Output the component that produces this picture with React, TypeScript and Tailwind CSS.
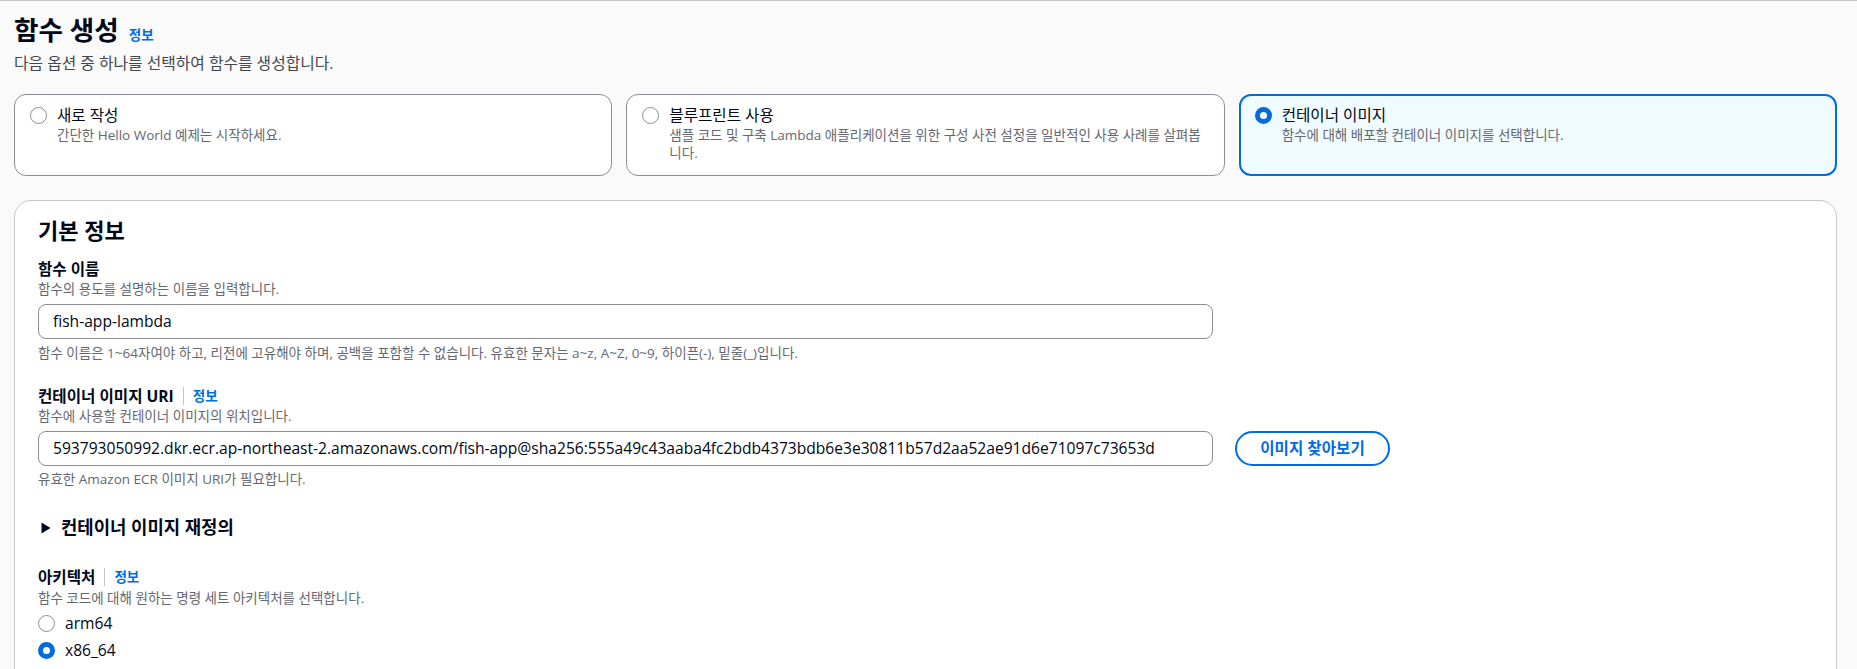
import React from 'react';

// 라디오 표시 (선택 / 미선택)
const Radio = ({ checked }: { checked?: boolean }) =>
    checked ? (
        <span className="block w-[17px] h-[17px] shrink-0 rounded-full border-[5px] border-[#006ce0] bg-white" />
    ) : (
        <span className="block w-[17px] h-[17px] shrink-0 rounded-full border-[1.5px] border-[#8c8c94] bg-white" />
    );

const Info = () => <a className="text-[13.5px] font-bold text-[#006ce0] leading-[18px] cursor-pointer">정보</a>;

const LabelWithInfo = ({ text }: { text: string }) => (
    <div className="flex items-center h-[22px]">
        <span className="text-[15.6px] font-bold leading-[22px]">{text}</span>
        <span className="mx-[9px] h-[18px] w-px bg-[#c6c6cd]" />
        <Info />
    </div>
);

interface Tile {
    title: string;
    desc: string;
    selected?: boolean;
}

const tiles: Tile[] = [
    { title: '새로 작성', desc: '간단한 Hello World 예제는 시작하세요.' },
    { title: '블루프린트 사용', desc: '샘플 코드 및 구축 Lambda 애플리케이션을 위한 구성 사전 설정을 일반적인 사용 사례를 살펴봅니다.' },
    { title: '컨테이너 이미지', desc: '함수에 대해 배포할 컨테이너 이미지를 선택합니다.', selected: true },
];

const uri =
    '593793050992.dkr.ecr.ap-northeast-2.amazonaws.com/fish-app@sha256:555a49c43aaba4fc2bdb4373bdb6e3e30811b57d2aa52ae91d6e71097c73653d';

const App = () => {
    return (
        <div className="min-h-screen bg-[#fafafa] border-t border-[#c6c6cd] pl-[14px] pr-[20px] pt-[12px] pb-10 text-[#000716] font-['Open_Sans','Noto_Sans_CJK_KR',sans-serif]">
            {/* Header */}
            <div className="flex items-baseline gap-[10px]">
                <h1 className="text-[26.6px] font-bold leading-[34px]">함수 생성</h1>
                <Info />
            </div>
            <p className="mt-[5px] text-[15.8px] leading-[22px] text-[#424650]">다음 옵션 중 하나를 선택하여 함수를 생성합니다.</p>

            {/* Tiles */}
            <div className="mt-[20px] grid grid-cols-3 gap-[14px]">
                {tiles.map((t) => (
                    <div
                        key={t.title}
                        className={
                            t.selected
                                ? 'min-h-[82px] rounded-[12px] border-2 border-[#006ce0] bg-[#f0fbff] pt-[8px] pl-[14px] pr-[17px] pb-[12px] flex gap-[10px]'
                                : 'min-h-[82px] rounded-[12px] border border-[#8c8c94] bg-white pt-[9px] pl-[15px] pr-[18px] pb-[13px] flex gap-[10px]'
                        }
                    >
                        <div className="mt-[3px]">
                            <Radio checked={t.selected} />
                        </div>
                        <div>
                            <div className="text-[15.6px] leading-[22px]">{t.title}</div>
                            <div className="text-[13.5px] leading-[18px] text-[#656871]">{t.desc}</div>
                        </div>
                    </div>
                ))}
            </div>

            {/* 기본 정보 */}
            <div className="mt-[24px] rounded-[17px] border border-[#c6c6cd] bg-white px-[23px] pt-[16px] pb-10">
                <h2 className="text-[22px] font-bold leading-[27px]">기본 정보</h2>

                <div className="mt-[14px] text-[15.6px] font-bold leading-[22px]">함수 이름</div>
                <div className="text-[13.5px] leading-[18px] text-[#656871]">함수의 용도를 설명하는 이름을 입력합니다.</div>
                <div className="mt-[6px] w-[1175px] h-[35px] rounded-[8px] border border-[#8c8c94] bg-white px-[14px] flex items-center text-[15.6px]">
                    fish-app-lambda
                </div>
                <div className="mt-[5px] text-[13.5px] leading-[18px] text-[#656871]">
                    함수 이름은 1~64자여야 하고, 리전에 고유해야 하며, 공백을 포함할 수 없습니다. 유효한 문자는 a~z, A~Z, 0~9, 하이픈(-), 밑줄(_)입니다.
                </div>

                <div className="mt-[23px]">
                    <LabelWithInfo text="컨테이너 이미지 URI" />
                </div>
                <div className="text-[13.5px] leading-[18px] text-[#656871]">함수에 사용할 컨테이너 이미지의 위치입니다.</div>
                <div className="mt-[6px] flex items-center gap-[22px]">
                    <div className="w-[1175px] h-[35px] rounded-[8px] border border-[#8c8c94] bg-white px-[14px] flex items-center text-[15.6px] whitespace-nowrap overflow-hidden">
                        {uri}
                    </div>
                    <button className="h-[35px] w-[155px] rounded-full border-2 border-[#006ce0] text-[15.6px] font-bold text-[#006ce0]">
                        이미지 찾아보기
                    </button>
                </div>
                <div className="mt-[4px] text-[13.5px] leading-[18px] text-[#656871]">유효한 Amazon ECR 이미지 URI가 필요합니다.</div>

                <div className="mt-[27px] flex items-center h-[25px]">
                    <svg width="10" height="12" viewBox="0 0 10 12" className="ml-[3px]">
                        <path d="M0.5 0.5 L9.5 6 L0.5 11.5 Z" fill="#000716" />
                    </svg>
                    <span className="ml-[10px] text-[17.8px] font-bold leading-[25px]">컨테이너 이미지 재정의</span>
                </div>

                <div className="mt-[26px]">
                    <LabelWithInfo text="아키텍처" />
                </div>
                <div className="mt-[1px] text-[13.5px] leading-[18px] text-[#656871]">함수 코드에 대해 원하는 명령 세트 아키텍처를 선택합니다.</div>
                <div className="mt-[5px] flex flex-col gap-[5px]">
                    <div className="flex items-center gap-[10px] h-[22px]">
                        <Radio />
                        <span className="text-[15.6px] leading-[22px]">arm64</span>
                    </div>
                    <div className="flex items-center gap-[10px] h-[22px]">
                        <Radio checked />
                        <span className="text-[15.6px] leading-[22px]">x86_64</span>
                    </div>
                </div>
            </div>
        </div>
    );
};

export default App;
